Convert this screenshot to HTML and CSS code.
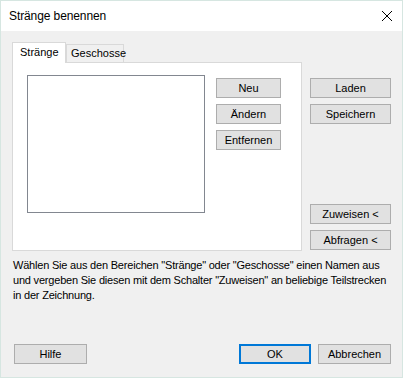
FILE: index.html
```html
<!DOCTYPE html>
<html lang="de">
    <head>
        <meta charset="UTF-8" />
        <title>Stränge benennen</title>
        <link rel="stylesheet" href="styles.css">
    </head>
    <body>
        <div class="window">
            <div class="titlebar">
                <span class="title">Stränge benennen</span>
                <svg class="close" width="12" height="12" viewBox="0 0 12 12">
                    <path d="M1 1 L11 11 M11 1 L1 11" stroke="#000" stroke-width="1" fill="none" />
                </svg>
            </div>
            <div class="client">
                <div class="main">
                    <div class="tabs">
                        <div class="tab-strip">
                            <div class="tab active">Stränge</div>
                            <div class="tab">Geschosse</div>
                        </div>
                        <div class="tab-panel">
                            <div class="listbox"></div>
                            <div class="panel-buttons">
                                <button>Neu</button>
                                <button>Ändern</button>
                                <button>Entfernen</button>
                            </div>
                        </div>
                    </div>
                    <div class="side">
                        <div class="side-group">
                            <button>Laden</button>
                            <button>Speichern</button>
                        </div>
                        <div class="side-group">
                            <button>Zuweisen &lt;</button>
                            <button>Abfragen &lt;</button>
                        </div>
                    </div>
                </div>
                <p class="hint">Wählen Sie aus den Bereichen "Stränge" oder "Geschosse" einen Namen aus<br>und vergeben Sie diesen mit dem Schalter "Zuweisen" an beliebige Teilstrecken<br>in der Zeichnung.</p>
                <div class="footer">
                    <button class="wide">Hilfe</button>
                    <span class="spacer"></span>
                    <button class="wide default">OK</button>
                    <button class="wide">Abbrechen</button>
                </div>
            </div>
        </div>
    </body>
</html>
```

FILE: styles.css
```css
body {
    margin: 0;
    font-family: "Liberation Sans", Arial, sans-serif;
    font-size: 11px;
    color: #000;
}

.window {
    box-sizing: border-box;
    width: 403px;
    height: 378px;
    border: 1px solid #d6e6e1;
    display: flex;
    flex-direction: column;
}

.titlebar {
    height: 30px;
    background: #ffffff;
    display: flex;
    align-items: center;
    padding: 0 9px 0 8px;
}

.title {
    font-size: 12px;
    letter-spacing: -0.1px;
    flex: 1;
}

.close {
    display: block;
}

.client {
    flex: 1;
    background: #f0f0f0;
    display: flex;
    flex-direction: column;
    padding: 11px 10px 13px 11px;
}

.main {
    display: flex;
}

.tabs {
    width: 290px;
}

.tab-strip {
    display: flex;
    height: 20px;
    align-items: flex-end;
}

.tab {
    box-sizing: border-box;
    height: 18px;
    border: 1px solid #d9d9d9;
    border-bottom: none;
    background: #f0f0f0;
    padding: 2px 0 0 4px;
    width: 58px;
}

.tab.active {
    position: relative;
    z-index: 1;
    height: 21px;
    width: 54px;
    margin-bottom: -1px;
    background: #ffffff;
    padding: 3px 0 0 7px;
}

.tab-panel {
    box-sizing: border-box;
    height: 189px;
    background: #ffffff;
    border: 1px solid #d9d9d9;
    display: flex;
    align-items: flex-start;
    padding: 12px 0 0 14px;
}

.listbox {
    box-sizing: border-box;
    width: 178px;
    height: 138px;
    border: 1px solid #828790;
    background: #ffffff;
}

.panel-buttons {
    display: flex;
    flex-direction: column;
    gap: 6px;
    margin: 3px 0 0 11px;
}

button {
    box-sizing: border-box;
    width: 65px;
    height: 20px;
    padding: 0;
    background: #e1e1e1;
    border: 1px solid #adadad;
    font-family: inherit;
    font-size: 11px;
    color: #000;
}

.side {
    width: 81px;
    margin-left: 8px;
    padding: 36px 0 1px;
    display: flex;
    flex-direction: column;
    justify-content: space-between;
}

.side-group {
    display: flex;
    flex-direction: column;
    gap: 6px;
}

.side button {
    width: 81px;
}

.hint {
    margin: 7px 0 0 1px;
    line-height: 15px;
    letter-spacing: -0.2px;
    white-space: nowrap;
}

.footer {
    margin-top: auto;
    display: flex;
    gap: 7px;
    padding: 0 1px 0 2px;
}

.footer .spacer {
    flex: 1;
}

button.wide {
    width: 73px;
}

button.default {
    width: 72px;
    border: 2px solid #0078d7;
}
```
